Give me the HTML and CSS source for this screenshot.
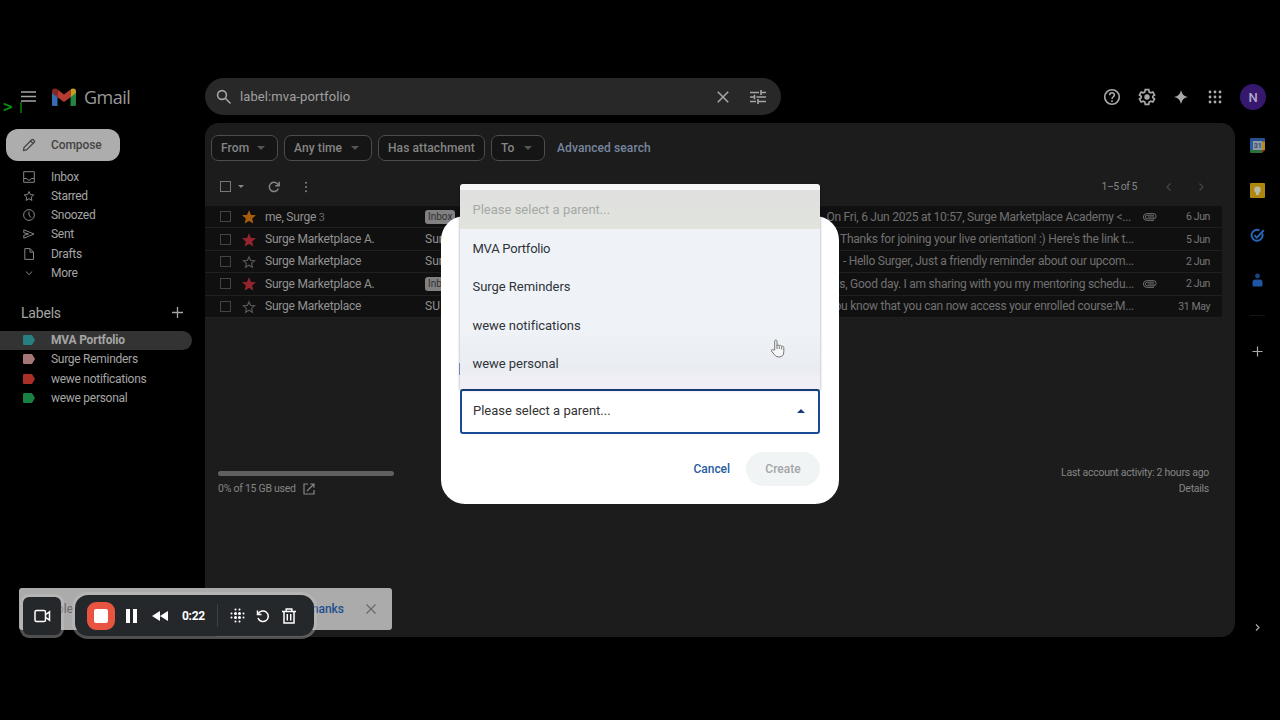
FILE: index.html
```html
<!DOCTYPE html>
<html lang="en">
<head>
    <meta charset="utf-8">
    <title>Gmail - MVA Portfolio</title>
    <link rel="stylesheet" href="styles.css">
</head>
<body>
    <svg width="0" height="0" class="defs">
        <symbol id="star" viewBox="0 0 24 24"><path d="M12 3l2.700 6.200 6.800.6-5.100 4.500 1.500 6.600-5.900-3.500-5.900 3.500 1.500-6.600-5.100-4.500 6.800-.6z"/></symbol>
        <symbol id="tag" viewBox="0 0 12 10"><path d="M1.300 0h6.900q.7 0 1.100.6L12 5 9.300 9.400q-.4.6-1.100.6H1.300Q0 10 0 8.700V1.300Q0 0 1.300 0z"/></symbol>
        <symbol id="clip" viewBox="0 0 14 8"><path d="M11.300 5.800H4.200a1.800 1.800 0 0 1 0-3.600h6.800M11.300 4H4.800M11 7.400H3.800a3.400 3.400 0 0 1 0-6.800h6.700a2.600 2.600 0 0 1 0 5.200" fill="none" stroke="currentColor" stroke-width=".9"/></symbol>
    </svg>

    <div class="app">
        <header>
            <div class="brand">
                <svg class="menu" viewBox="0 0 15 11"><path d="M0 1h15M0 5.500h15M0 10h15"/></svg>
                <svg class="logo" viewBox="0 0 24 18">
                    <path fill="#386cb0" d="M0 3l5.500 4v11H1.600A1.600 1.600 0 0 1 0 16.400z"/>
                    <path fill="#268442" d="M18.500 7L24 3v13.400A1.600 1.600 0 0 1 22.400 18h-3.900z"/>
                    <path fill="#c0a020" d="M18.500 1.600C20.500-.3 24 0 24 3v2l-5.500 4.200z"/>
                    <path fill="#842722" d="M0 5V3C0 0 3.500-.3 5.500 1.600v7.600z"/>
                    <path fill="#b83a30" d="M5.500 1.600L12 6.500l6.500-4.900v7.600L12 14.100 5.500 9.200z"/>
                </svg>
                <span class="name">Gmail</span>
            </div>
            <div class="search">
                <svg class="i16" viewBox="0 0 16 16"><circle cx="6" cy="6" r="4.400"/><path d="M9.300 9.300L14.500 14.500"/></svg>
                <span class="query">label:mva-portfolio</span>
                <svg class="i16 clear" viewBox="0 0 16 16"><path d="M2.800 2.800l10.400 10.400M13.200 2.800L2.800 13.200"/></svg>
                <svg class="i16" viewBox="0 0 16 16"><path d="M0 3.500h9M11 3.500h5M11 1v5M0 8h4M4.500 5.700v4.600M6.500 8H16M0 12.500h6M8 12.500h8M8 10v5"/></svg>
            </div>
            <div class="tools">
                <svg class="i18" viewBox="0 0 18 18"><circle cx="9" cy="9" r="7.300"/><path d="M6.700 7.200C6.700 4 11.400 4 11.400 7c0 1.700-2.400 1.900-2.400 4M9 12.300v1.600"/></svg>
                <svg class="i18" viewBox="0 0 24 24"><path stroke-width="2.200" d="M9.700 2.200h4.600l.6 3.100 1.900 1.100 3-1.100 2.300 4-2.400 2v1.400l2.400 2-2.300 4-3-1.100-1.900 1.100-.6 3.100H9.700l-.6-3.100-1.900-1.100-3 1.100-2.300-4 2.400-2v-1.400l-2.400-2 2.300-4 3 1.100 1.900-1.100z"/><circle class="solid" cx="12" cy="12" r="3.600"/></svg>
                <svg class="i14 spark" viewBox="0 0 14 14"><path class="solid" d="M7 0q1 6 7 7-6 1-7 7-1-6-7-7 6-1 7-7z"/></svg>
                <svg class="i14 apps" viewBox="0 0 14 14"><path class="dots" d="M2 2h.01M7 2h.01M12 2h.01M2 7h.01M7 7h.01M12 7h.01M2 12h.01M7 12h.01M12 12h.01"/></svg>
                <span class="avatar">N</span>
            </div>
            <span class="prompt">&gt;</span><span class="caret"></span>
        </header>

        <div class="columns">
            <nav>
                <div class="compose">
                    <svg viewBox="0 0 14 14"><path d="M1.500 12.500l.5-3L9.700 1.800q.8-.7 1.600 0l.9.900q.8.8 0 1.600L4.500 12zM8.600 3l2.400 2.400"/></svg>
                    <span>Compose</span>
                </div>
                <ul class="folders">
                    <li><svg viewBox="0 0 12 12"><path d="M.7.7h10.600v10.600H.7zM.7 7.500h3q.4 1.700 2.300 1.700t2.300-1.700h3"/></svg>Inbox</li>
                    <li><svg class="thick" viewBox="0 0 24 24"><use href="#star"/></svg>Starred</li>
                    <li><svg viewBox="0 0 12 12"><circle cx="6" cy="6" r="5.400"/><path d="M6 2.600V6l2 2.700"/></svg>Snoozed</li>
                    <li><svg viewBox="0 0 12 12"><path d="M.8 1.800L11 6 .8 10.200V7.300L5.500 6 .8 4.700z"/></svg>Sent</li>
                    <li><svg viewBox="0 0 12 12"><path d="M1.800.6h5.300l3.400 3.500v7.300H1.800zM7 .8v3.400h3.400"/></svg>Drafts</li>
                    <li><svg viewBox="0 0 12 12"><path d="M2.800 4.500L6 7.600l3.200-3.100"/></svg>More</li>
                </ul>
                <div class="heading"><span>Labels</span><svg viewBox="0 0 10 10"><path d="M5 0v10M0 5h10"/></svg></div>
                <ul class="labels">
                    <li class="active"><svg class="teal"><use href="#tag"/></svg>MVA Portfolio</li>
                    <li><svg class="pink"><use href="#tag"/></svg>Surge Reminders</li>
                    <li><svg class="red"><use href="#tag"/></svg>wewe notifications</li>
                    <li><svg class="green"><use href="#tag"/></svg>wewe personal</li>
                </ul>
            </nav>

            <main>
                <div class="chips">
                    <span class="chip from">From<i class="down"></i></span>
                    <span class="chip time">Any time<i class="down"></i></span>
                    <span class="chip attach">Has attachment</span>
                    <span class="chip to">To<i class="down"></i></span>
                    <span class="advanced">Advanced search</span>
                </div>
                <div class="toolbar">
                    <i class="box"></i><i class="down small"></i>
                    <svg class="refresh" viewBox="0 0 12 12"><path d="M10.300 7.500A4.600 4.600 0 1 1 9.300 2.800L11 4.500M11.200.8v3.900H7.300"/></svg>
                    <svg class="more" viewBox="0 0 4 12"><path d="M2 1.800h.01M2 6h.01M2 10.200h.01"/></svg>
                    <span class="count">1–5 of 5</span>
                    <svg class="page" viewBox="0 0 8 10"><path d="M5.500 1.500L2 5l3.500 3.500"/></svg>
                    <svg class="page" viewBox="0 0 8 10"><path d="M2.500 1.500L6 5 2.500 8.500"/></svg>
                </div>
                <div class="mails">
                    <div class="mail">
                        <i class="box"></i><svg class="star orange"><use href="#star"/></svg>
                        <span class="sender">me, Surge <small>3</small></span><span class="subject"><b>Inbox</b></span>
                        <span class="snippet first">On Fri, 6 Jun 2025 at 10:57, Surge Marketplace Academy &lt;...</span>
                        <span class="att"><svg><use href="#clip"/></svg></span><time>6 Jun</time>
                    </div>
                    <div class="mail">
                        <i class="box"></i><svg class="star crimson"><use href="#star"/></svg>
                        <span class="sender">Surge Marketplace A.</span><span class="subject">Sur</span>
                        <span class="snippet">Thanks for joining your live orientation! :) Here's the link t...</span>
                        <span class="att"></span><time>5 Jun</time>
                    </div>
                    <div class="mail">
                        <i class="box"></i><svg class="star"><use href="#star"/></svg>
                        <span class="sender">Surge Marketplace</span><span class="subject">Sur</span>
                        <span class="snippet">- Hello Surger, Just a friendly reminder about our upcom...</span>
                        <span class="att"></span><time>2 Jun</time>
                    </div>
                    <div class="mail">
                        <i class="box"></i><svg class="star crimson"><use href="#star"/></svg>
                        <span class="sender">Surge Marketplace A.</span><span class="subject"><b>Inbox</b></span>
                        <span class="snippet">s, Good day. I am sharing with you my mentoring schedu...</span>
                        <span class="att"><svg><use href="#clip"/></svg></span><time>2 Jun</time>
                    </div>
                    <div class="mail">
                        <i class="box"></i><svg class="star"><use href="#star"/></svg>
                        <span class="sender">Surge Marketplace</span><span class="subject">SU</span>
                        <span class="snippet">you know that you can now access your enrolled course:M...</span>
                        <span class="att"></span><time>31 May</time>
                    </div>
                </div>
                <footer>
                    <div class="storage">
                        <div class="meter"></div>
                        <span>0% of 15 GB used</span>
                        <svg viewBox="0 0 12 12"><path d="M5 1H1v10h10V7M7.200 1H11v3.800M11 1L4 8"/></svg>
                    </div>
                    <div class="activity">Last account activity: 2 hours ago<br>Details</div>
                </footer>
            </main>

            <aside>
                <svg class="cal" viewBox="0 0 15 15"><path fill="#27508f" d="M0 1q0-1 1-1h13q1 0 1 1v3H0z"/><path fill="#285da6" d="M0 3h3v9H0z"/><path fill="#b38b19" d="M12 3.500h3V12h-3z"/><path fill="#28713b" d="M0 12h12v3H1q-1 0-1-1z"/><path fill="#9c3027" d="M12 12h3l-3 3z"/><path fill="#8f98a4" d="M3 3h9v9H3z"/><text x="3.700" y="10.300">31</text></svg>
                <svg viewBox="0 0 15 15"><rect width="15" height="15" rx="1" fill="#ad880d"/><circle cx="7.500" cy="6.800" r="3.200" fill="#bcb9aa"/><path fill="#bcb9aa" d="M6 9h3v3H6z"/></svg>
                <svg viewBox="0 0 15 15"><g fill="none" stroke="#2864b5" stroke-width="2"><path d="M12.300 5.500A5.500 5.500 0 1 1 9.500 2.300"/><path d="M4.500 7.300l2.300 2.300 7-7.300"/></g></svg>
                <svg viewBox="0 0 15 15"><circle cx="7.500" cy="3" r="2.400" fill="#174783"/><path fill="#1e56a5" d="M2.500 12V9.500q0-3 3-3h4q3 0 3 3V12q0 1.500-1.500 1.500H4Q2.500 13.500 2.500 12z"/></svg>
                <hr>
                <svg class="plus" viewBox="0 0 15 15"><path d="M7.500 2.500v10M2.500 7.500h10"/></svg>
                <svg class="plus open" viewBox="0 0 15 15"><path d="M6 4.500l3 3-3 3"/></svg>
            </aside>
        </div>
    </div>

    <!-- new label dialog -->
    <div class="dialog">
        <div class="select">Please select a parent...<i class="up"></i></div>
        <div class="buttons"><span class="cancel">Cancel</span><span class="create">Create</span></div>
        <ul class="options">
            <li class="disabled">Please select a parent...</li>
            <li>MVA Portfolio</li>
            <li>Surge Reminders</li>
            <li>wewe notifications</li>
            <li>wewe personal</li>
        </ul>
        <i class="check"></i>
    </div>
    <svg class="cursor" viewBox="0 0 16 19"><path d="M4.700 11V2.300q0-1.300 1.100-1.300T7 2.300V7q0-1 1.100-1t1.200 1.200q.2-.9 1.200-.8t1.100 1.300q.2-.6 1.200-.4t1 1.400v4q0 5.300-5 5.300-3.200 0-4.500-2.500L1.500 12q-.5-1.100.4-1.400.8-.3 1.500.4zM7 7v3M9.300 7.500V10M11.600 8.200v2.200"/></svg>

    <!-- snackbar and recorder controls -->
    <div class="snackbar"><span>ble</span><span class="thanks">hanks</span><svg viewBox="0 0 10 10"><path d="M.5.5l9 9M9.500.5l-9 9"/></svg></div>
    <div class="camera"><svg viewBox="0 0 17 14"><rect x="1" y="1.500" width="10.500" height="11" rx="1.500"/><path d="M12 5.500l3.500-2.700v8.400L12 8.500"/></svg></div>
    <div class="recorder">
        <span class="stop"></span>
        <svg class="pause" viewBox="0 0 13 14"><path d="M1 0h4v14H1zM8 0h4v14H8z"/></svg>
        <svg class="rewind" viewBox="0 0 16 10"><path d="M8 0v10L0 5zM16 0v10L8 5z"/></svg>
        <span class="clock">0:22</span>
        <span class="rule"></span>
        <svg class="grid" viewBox="0 0 15 15"><path class="big" d="M5.500 5.500h.01M9.500 5.500h.01M5.500 9.500h.01M9.500 9.500h.01"/><path d="M5.500 1.500h.01M9.500 1.500h.01M5.500 13.500h.01M9.500 13.500h.01M1.500 5.500h.01M1.500 9.500h.01M13.500 5.500h.01M13.500 9.500h.01"/></svg>
        <svg class="undo" viewBox="0 0 14 14"><path d="M2.200 5A5.300 5.300 0 1 1 2 9M1.500 1.500v4h4"/></svg>
        <svg class="trash" viewBox="0 0 14 16"><path d="M0 3.500h14M4.200 3V1h5.600v2M2 3.500V15h10V3.500M5.300 6v6.500M8.700 6v6.500"/></svg>
    </div>
</body>
</html>
```
FILE: styles.css
```css
* { box-sizing: border-box; }
body { margin: 0; width: 1280px; height: 720px; overflow: hidden; background: #000; color: #a5a5a5; font-family: Roboto, sans-serif; font-size: 12px; }
ul { list-style: none; margin: 0; padding: 0; }
svg { display: block; flex: none; fill: none; stroke: currentColor; stroke-width: 1.2; }
i { display: block; flex: none; }
.defs { position: absolute; }
.app { padding-top: 70px; }

header { display: flex; height: 53px; position: relative; }
.brand { width: 205px; display: flex; align-items: center; padding-left: 21px; }
.menu { width: 15px; height: 11px; stroke-width: 1.6; }
.logo { width: 24px; height: 18px; margin-left: 16px; stroke: none; }
.name { font-family: "Open Sans", sans-serif; font-size: 18px; margin-left: 8px; letter-spacing: -0.5px; color: #999; }
.prompt { position: absolute; left: 3px; top: 27px; color: #098b12; font: bold 16px "DejaVu Sans Mono", monospace; }
.caret { position: absolute; left: 20px; top: 32px; width: 2px; height: 11px; background: #075d0a; }
.search { width: 576px; height: 37px; margin-top: 8px; padding: 0 15px 0 11px; border-radius: 19px; background: #282828; display: flex; align-items: center; }
.i16 { width: 16px; height: 16px; stroke-width: 1.6; }
.query { flex: 1; margin-left: 8px; font-size: 13px; letter-spacing: 0.1px; color: #a0a0a0; }
.clear { margin-right: 19px; }
.tools { flex: 1; display: flex; align-items: center; justify-content: flex-end; padding-right: 14px; color: #aaa; }
.i18 { width: 18px; height: 18px; margin-right: 17px; stroke-width: 1.6; }
.i14 { width: 14px; height: 14px; }
.spark { margin: 0 20px 0 1px; }
.apps { margin-right: 18px; }
.solid { fill: currentColor; stroke: none; }
.dots { stroke-width: 2.8; stroke-linecap: round; }
.avatar { width: 26px; height: 26px; border-radius: 50%; background: #36196f; color: #b3a6c8; font-size: 13px; font-weight: 500; line-height: 27px; text-align: center; }

.columns { display: flex; height: 514px; }
nav { width: 205px; padding-top: 6px; }
.compose { width: 114px; height: 32px; margin-left: 6px; border-radius: 12px; background: #adadad; color: #444; display: flex; align-items: center; padding-left: 16px; font-weight: 500; font-size: 12px; letter-spacing: -0.1px; }
.compose svg { width: 14px; height: 14px; margin-right: 15px; stroke-width: 1.3; }
.folders { padding-top: 6px; }
nav li { display: flex; align-items: center; height: 19.25px; padding-left: 23px; letter-spacing: -0.28px; }
nav li svg { width: 12px; height: 12px; margin-right: 16px; color: #858585; stroke-width: 1; }
nav li .thick { stroke-width: 2; }
.heading { display: flex; align-items: center; height: 48px; padding: 12px 22px 0 21px; justify-content: space-between; font-size: 14px; letter-spacing: -0.2px; }
.heading svg { width: 11px; height: 11px; }
.labels li { width: 192px; border-radius: 0 10px 10px 0; }
.labels svg { height: 10px; stroke: none; }
.labels .active { background: #333; font-weight: 700; letter-spacing: -0.2px; }
.labels .teal { fill: #268080; }
.labels .pink { fill: #a77777; }
.labels .red { fill: #aa3027; }
.labels .green { fill: #188043; }

main { width: 1030px; border-radius: 14px; background: #1c1c1c; }
.chips { display: flex; align-items: center; height: 26px; margin: 12px 0 0 6px; font-size: 12px; font-weight: 500; color: #858585; letter-spacing: 0.1px; }
.chip { height: 26px; border: 1px solid #4c4c4c; border-radius: 7px; background: #151515; display: flex; align-items: center; justify-content: space-between; padding: 0 12px 0 9px; margin-right: 6px; }
.from { width: 67px; }
.time { width: 88px; }
.attach { width: 107px; padding-right: 0; }
.to { width: 54px; margin-right: 12px; }
.advanced { color: #77869f; }
.down { border: 4px solid transparent; border-top-color: #555; border-bottom: 0; }
.toolbar { display: flex; align-items: center; height: 45px; padding: 6px 30px 0 15px; color: #858585; }
.box { width: 11px; height: 11px; border: 1.5px solid #777; }
.small { border-width: 3px; border-bottom: 0; border-top-color: #888; margin: 0 24px 0 7px; }
.refresh { width: 12px; height: 12px; stroke-width: 1.5; }
.more { width: 4px; height: 12px; margin-left: 24px; stroke-width: 2; stroke-linecap: round; }
.count { margin-left: auto; margin-right: 28px; font-size: 10.5px; letter-spacing: -0.5px; }
.page { width: 8px; height: 10px; color: #454545; margin-right: 24px; }
.page:last-child { margin-right: 0; }
.mails { width: 1017px; }
.mail { height: 22.4px; display: flex; align-items: center; background: #101010; border-bottom: 1px solid #202020; padding-left: 15px; color: #808080; }
.mail .box { border-color: #444; }
.star { width: 14px; height: 14px; margin: 1px 9px 0 11px; color: #555; stroke-width: 2; }
.orange { color: #a85d0c; fill: #a85d0c; }
.crimson { color: #93252e; fill: #93252e; }
.sender { width: 160px; color: #929292; letter-spacing: -0.22px; }
small { font-size: 11px; color: #666; }
.subject { width: 60px; color: #929292; }
.subject b { display: inline-block; font-size: 10px; font-weight: 400; line-height: 14px; padding: 0 3px; border-radius: 3px; background: #818181; color: #303030; }
.snippet { flex: 1; white-space: nowrap; display: flex; justify-content: flex-end; color: #707070; letter-spacing: -0.25px; }
.first { padding-right: 3px; }
.att { width: 24px; padding-left: 9px; color: #777; }
.att svg { width: 14px; height: 8px; }
.mail time { width: 52px; margin-right: 12px; text-align: right; font-size: 10.5px; letter-spacing: -0.4px; color: #777; }
footer { display: flex; justify-content: space-between; margin: 147px 26px 0 13px; font-size: 10.5px; letter-spacing: -0.26px; line-height: 16px; color: #858585; }
.storage { width: 176px; display: flex; flex-wrap: wrap; align-items: center; align-content: flex-start; padding-top: 6px; }
.storage svg { width: 12px; height: 12px; margin-left: 7px; }
.meter { width: 176px; height: 5px; border-radius: 3px; background: #606060; margin-bottom: 5px; }
.activity { text-align: right; }

aside { width: 45px; padding: 14.5px 0 0 15px; }
aside svg { width: 15px; height: 15px; margin-bottom: 30px; stroke: none; }
.cal text { font-size: 7px; font-weight: bold; fill: #344b6d; }
aside hr { width: 15px; margin: -3px 0 28px; border: 0; border-top: 1px solid #151515; }
aside .plus { stroke: #aaa; }
aside .open { margin-top: 261px; }

.dialog { position: absolute; left: 441px; top: 216px; width: 398px; height: 288px; border-radius: 24px; background: #fff; padding: 173px 19px 0 19px; }
.select { height: 45px; border: 2px solid #194b92; border-radius: 3px; padding: 0 13px 2px 11px; display: flex; align-items: center; justify-content: space-between; color: #333; font-size: 13px; }
.up { border: 4px solid transparent; border-bottom-color: #193a80; border-top: 0; }
.buttons { display: flex; justify-content: flex-end; align-items: center; margin-top: 18px; font-weight: 500; }
.cancel { color: #285c9e; margin-right: 16px; letter-spacing: -0.05px; }
.create { width: 74px; line-height: 34px; border-radius: 17px; background: #f1f4f4; color: #a3a6a7; text-align: center; }
.check { position: absolute; left: 18px; top: 147px; width: 1px; height: 12px; background: #6a88b8; }
.options { position: absolute; left: 19px; top: -32px; width: 360px; height: 205px; border-top: 6px solid #f5f5f5; border-radius: 3px 3px 0 0; background: linear-gradient(#eff3f7 70%, #e9edf1 90%, #f1eff6 96%); box-shadow: 0 1px 3px #0006; color: #30343a; font-size: 13px; }
.options li { height: 38.5px; line-height: 39px; padding-left: 12.5px; letter-spacing: -0.04px; }
.options li:nth-child(2) { letter-spacing: -0.25px; }
.options .disabled { background: linear-gradient(#e0e0e0, #e0e4dc); color: #a5a9a4; letter-spacing: 0; }
.cursor { position: absolute; left: 770px; top: 339px; width: 16px; height: 19px; fill: #f4f6f7; color: #777; stroke-width: 1; }

.snackbar { position: absolute; left: 19px; top: 588px; width: 373px; height: 42px; border-radius: 3px; background: #ababab; display: flex; align-items: center; padding-left: 38px; color: #686868; }
.thanks { margin-left: auto; margin-right: 22px; color: #214f8d; font-weight: 500; }
.snackbar svg { width: 10px; height: 10px; margin-right: 16px; }
.camera, .recorder { position: absolute; background: #25282b; color: #fff; display: flex; align-items: center; box-shadow: 0 0 0 3px #c6c6c666; }
.camera { left: 23px; top: 597px; width: 38px; height: 38px; border-radius: 6px; justify-content: center; }
.camera svg { width: 17px; height: 14px; stroke-width: 1.5; }
.recorder { left: 75px; top: 595px; width: 239px; height: 41px; border-radius: 13px; padding-left: 12px; }
.stop { width: 28px; height: 28px; border-radius: 9px; background: #e85440; border: 7px solid #e85440; display: flex; }
.stop::before { content: ""; flex: 1; border-radius: 2px; background: #fff; }
.pause { width: 13px; height: 14px; margin-left: 10px; fill: #fff; stroke: none; }
.rewind { width: 16px; height: 10px; margin-left: 14px; fill: #fff; stroke: none; }
.clock { width: 23px; margin-left: 14px; font-weight: 700; font-size: 12px; letter-spacing: -0.3px; }
.rule { width: 1px; height: 23px; margin-left: 12px; background: #3c3f42; }
.grid { width: 15px; height: 15px; margin-left: 12px; stroke-width: 2; stroke-linecap: round; }
.big { stroke-width: 3; }
.undo { width: 14px; height: 14px; margin-left: 11px; stroke-width: 1.5; }
.trash { width: 14px; height: 16px; margin-left: 12px; stroke-width: 1.5; }
```
